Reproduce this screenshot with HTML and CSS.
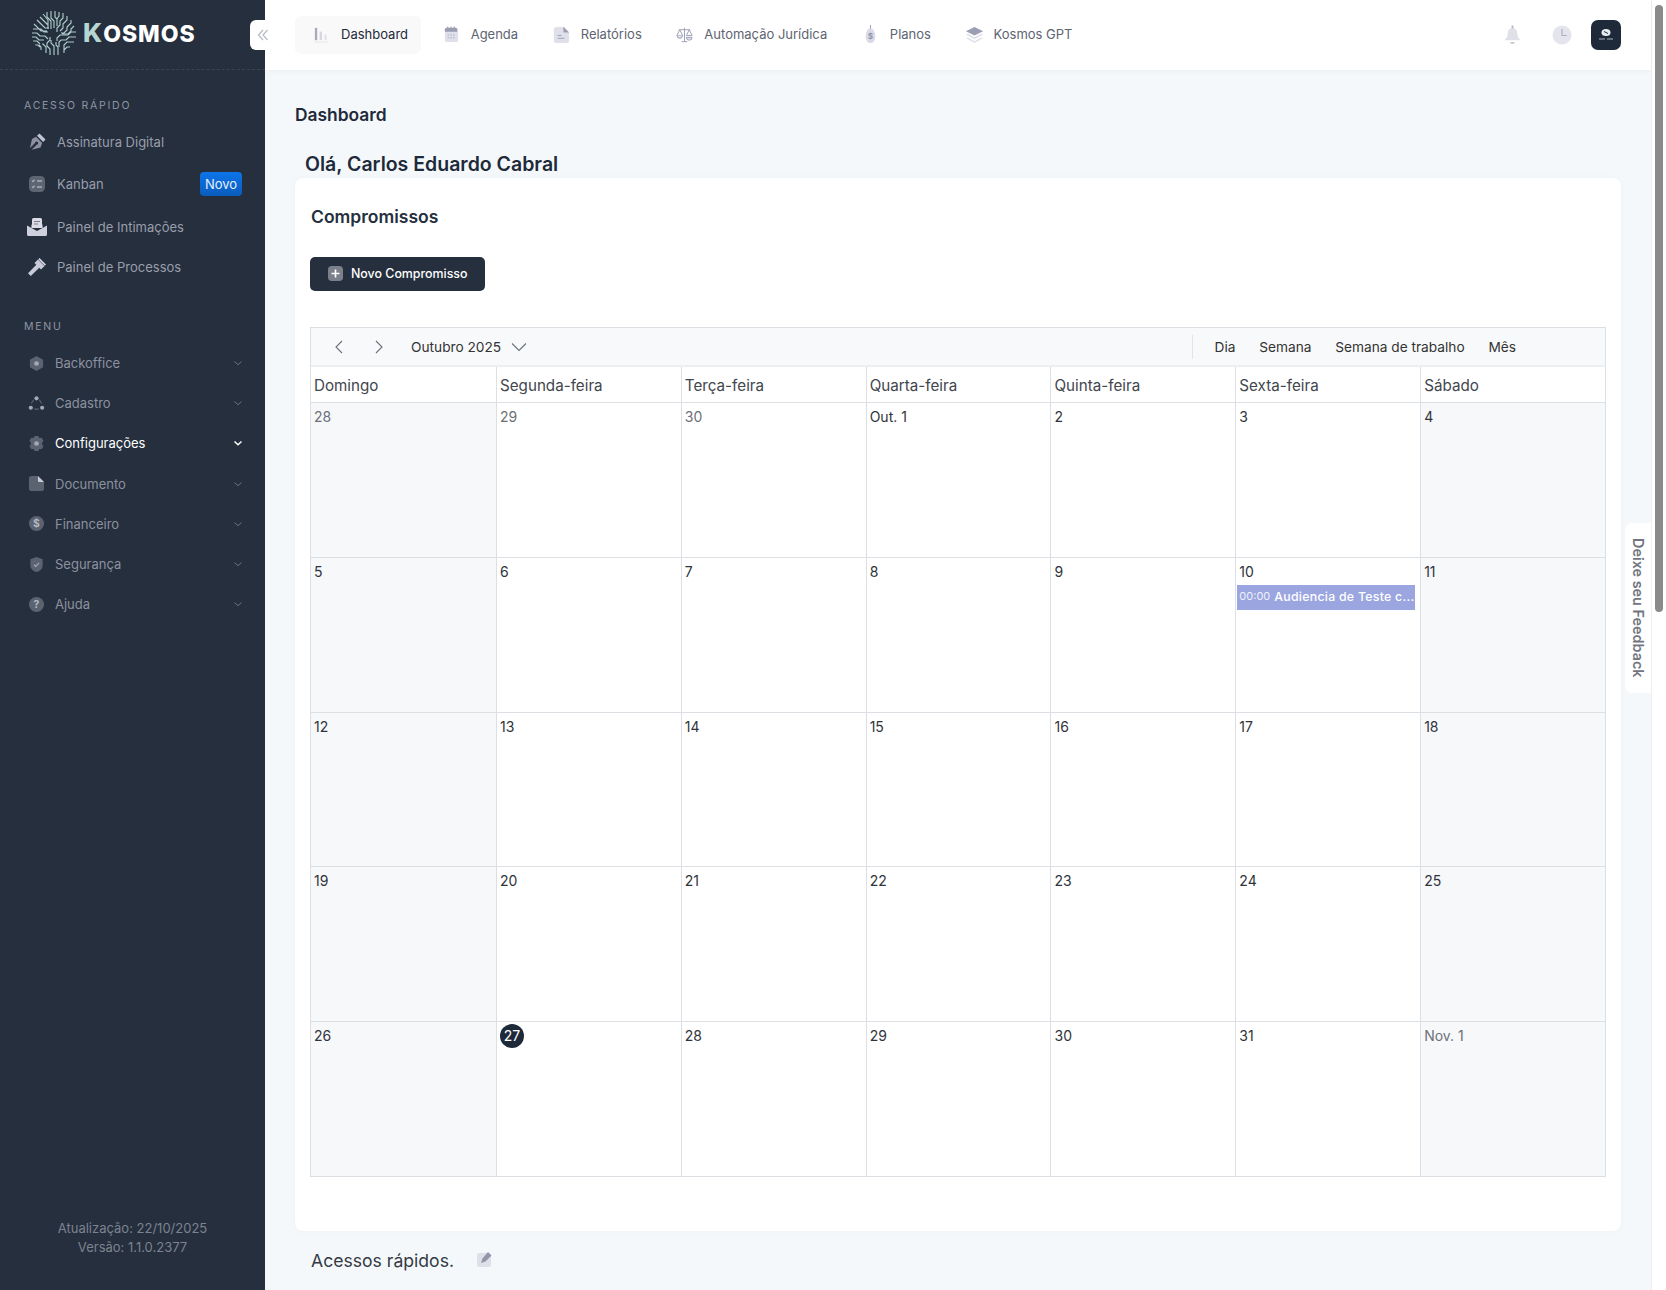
FILE: index.html
```html
<!DOCTYPE html>
<html lang="pt-BR">
<head>
<meta charset="utf-8">
<title>Kosmos - Dashboard</title>
<link rel="stylesheet" href="styles.css">
</head>
<body>
<div class="app">
  <aside class="sidebar">
    <div class="brand">
      <svg class="brand-mark" viewBox="0 0 46 46" fill="none" stroke="#aeccc9" stroke-width="1.15">
        <defs><clipPath id="globe"><circle cx="23" cy="23" r="22.5"/></clipPath></defs>
        <g clip-path="url(#globe)">
          <path d="M6 10l8 8h4M9 7l8 8v4M3 14l7 7h6M12 4l5 6v6M2 19h8l3 3h4"/>
          <path d="M16 2v5l4 4v8M20 1v7l3 3v7M24 1v6l2 2v7M28 2v4l-2 3M32 3v5l-3 3v4l-3 3v4M36 6v4l-4 4v4l-3 3M40 10v3l-4 4v3l-3 3h-3M43 16l-3 3v2l-3 3h-6"/>
          <path d="M45 22h-5l-3 3h-8l-3 3v3M45 27h-7l-3 3h-5l-2 2v5M43 32h-7l-3 3v6M39 37h-3l-3 3v3"/>
          <path d="M27 45v-8l-2-2v-3M23 45v-9l-3-3v-3M19 45v-6l-3-3v-3l3-3v-3M15 43v-6l-3-3h-1M10 40v-3l-2-2"/>
          <path d="M1 23h5l3 3h5l3 3M1 27h4l3 3h5M2 31h4l3 3M4 35h3l2 2"/>
        </g>
      </svg>
      <div class="brand-name"><span class="brand-k">K</span><span class="brand-rest">OSMOS</span></div>
    </div>
    <button class="collapse" type="button" aria-label="Recolher">
      <svg viewBox="0 0 14 14" fill="none" stroke="#b8bcc6" stroke-width="1.3"><path d="M7 2 2.500 7 7 12M11.500 2 7 7l4.500 5"/></svg>
    </button>

    <div class="side-label side-label-first">ACESSO RÁPIDO</div>
    <a class="quick quick-40">
      <svg class="quick-ico" viewBox="0 0 20 20"><path fill="#c3c4d3" d="M12.500 1.500 18.500 7.500 16.200 10 10 3.800Z"/><path fill="#8f91a3" d="M9 4.800 15.200 11 13.500 15.500 4.600 17.800 9.700 12.700A1.600 1.600 0 1 0 8 11L3 16.100 5 7Z"/></svg>
      <span>Assinatura Digital</span>
    </a>
    <a class="quick quick-43">
      <svg class="quick-ico" viewBox="0 0 20 20"><rect x="2" y="2" width="16" height="16" rx="4.500" fill="#5d6472"/><path fill="none" stroke="#a9adba" stroke-width="1.300" d="M5 6.600l1 1 1.600-1.800M5 12.600l1 1 1.600-1.800M10 7h5M10 13h5"/></svg>
      <span>Kanban</span>
      <span class="badge">Novo</span>
    </a>
    <a class="quick quick-43">
      <svg class="quick-ico" viewBox="0 0 20 20"><path fill="#8a8c9d" d="M4 8 10 3l6 5v3H4Z"/><path fill="#dcdce6" d="M5 2.500A1.500 1.500 0 0 1 6.500 1h7A1.500 1.500 0 0 1 15 2.500V11H5Z"/><path stroke="#7a7c8e" stroke-width="1.200" d="M7 4.500h6M7 7h4"/><path fill="#cfd0de" d="M0 8.500 10 14l10-5.500v9A1.500 1.500 0 0 1 18.500 19h-17A1.500 1.500 0 0 1 0 17.500Z"/></svg>
      <span>Painel de Intimações</span>
    </a>
    <a class="quick quick-38">
      <svg class="quick-ico" viewBox="0 0 20 20"><path fill="#c9cad8" d="M11 2.500 17.500 9 14 12.500 12.300 10.800 3.800 19 1 16.200 9.300 7.700 7.500 6Z"/><path fill="#d6d7e2" d="M12.500 1 19 7.500 17.800 8.700 11.300 2.200Z"/></svg>
      <span>Painel de Processos</span>
    </a>

    <div class="side-label side-label-menu">MENU</div>
    <a class="menu-item">
      <svg class="menu-ico" viewBox="0 0 18 18"><path fill="#5b6270" d="M9 1l7 4v8l-7 4-7-4V5Z"/><circle cx="9" cy="9" r="2.500" fill="#a4a8b5"/></svg>
      <span class="menu-text">Backoffice</span><svg class="chev" viewBox="0 0 10 10"><path d="M1.500 3.500 5 6.700l3.500-3.200"/></svg>
    </a>
    <a class="menu-item">
      <svg class="menu-ico" viewBox="0 0 18 18"><circle cx="9" cy="3.500" r="2.200" fill="#a4a8b5"/><circle cx="3" cy="13.500" r="2.200" fill="#a4a8b5"/><circle cx="15" cy="13.500" r="2.200" fill="#a4a8b5"/><path fill="none" stroke="#5b6270" stroke-width="1.200" d="M6 5 3.500 9M12 5l2.500 4M6.500 15h5"/></svg>
      <span class="menu-text">Cadastro</span><svg class="chev" viewBox="0 0 10 10"><path d="M1.500 3.500 5 6.700l3.500-3.200"/></svg>
    </a>
    <a class="menu-item menu-item-active">
      <svg class="menu-ico" viewBox="0 0 18 18"><path fill="#5b6270" d="M7 1h4l1 2.200 2.500-.3 2 3.300L15 8v2l1.500 1.800-2 3.300-2.500-.3L11 17H7l-1-2.200-2.500.3-2-3.300L3 10V8L1.500 6.200l2-3.300 2.500.3Z"/><circle cx="9" cy="9" r="2.500" fill="#a4a8b5"/></svg>
      <span class="menu-text">Configurações</span><svg class="chev" viewBox="0 0 10 10"><path d="M1.500 3.500 5 6.700l3.500-3.200"/></svg>
    </a>
    <a class="menu-item">
      <svg class="menu-ico" viewBox="0 0 18 18"><path fill="#5b6270" d="M4 1h6.500L17 7.500V14a3 3 0 0 1-3 3H4a3 3 0 0 1-3-3V4a3 3 0 0 1 3-3Z"/><path fill="#c9cbd6" d="M10.500 1 17 7.500h-5A1.500 1.500 0 0 1 10.500 6Z"/></svg>
      <span class="menu-text">Documento</span><svg class="chev" viewBox="0 0 10 10"><path d="M1.500 3.500 5 6.700l3.500-3.200"/></svg>
    </a>
    <a class="menu-item">
      <svg class="menu-ico" viewBox="0 0 18 18"><circle cx="9" cy="9" r="8" fill="#5b6270"/><text class="menu-glyph" x="9" y="12.800" text-anchor="middle">$</text></svg>
      <span class="menu-text">Financeiro</span><svg class="chev" viewBox="0 0 10 10"><path d="M1.500 3.500 5 6.700l3.500-3.200"/></svg>
    </a>
    <a class="menu-item">
      <svg class="menu-ico" viewBox="0 0 18 18"><path fill="#5b6270" d="M9 1l6.500 2.500v6.500c0 3.500-3 6-6.500 7-3.500-1-6.500-3.500-6.500-7V3.500Z"/><path fill="none" stroke="#a4a8b5" stroke-width="1.300" d="M6.300 9.200 8.200 11l3.500-3.800"/></svg>
      <span class="menu-text">Segurança</span><svg class="chev" viewBox="0 0 10 10"><path d="M1.500 3.500 5 6.700l3.500-3.200"/></svg>
    </a>
    <a class="menu-item">
      <svg class="menu-ico" viewBox="0 0 18 18"><circle cx="9" cy="9" r="8" fill="#5b6270"/><text class="menu-glyph" x="9" y="12.800" text-anchor="middle">?</text></svg>
      <span class="menu-text">Ajuda</span><svg class="chev" viewBox="0 0 10 10"><path d="M1.500 3.500 5 6.700l3.500-3.200"/></svg>
    </a>

    <div class="side-foot">Atualização: 22/10/2025<br>Versão: 1.1.0.2377</div>
  </aside>

  <div class="main">
    <header class="topbar">
      <nav class="topnav">
        <a class="tab tab-active">
          <svg class="tab-ico" viewBox="0 0 20 20"><rect x="3" y="3" width="2.500" height="13" fill="#a9abbd"/><rect x="8" y="7" width="2.500" height="9" fill="#d5d6e0"/><rect x="13" y="10" width="2.500" height="6" fill="#e3e4ec"/><rect x="2" y="17.500" width="15" height="1" fill="#e3e4ec"/></svg>
          Dashboard
        </a>
        <a class="tab">
          <svg class="tab-ico" viewBox="0 0 20 20"><rect x="3" y="3" width="14" height="15" rx="2" fill="#dfe0ea"/><path fill="#9b9db2" d="M3 5a2 2 0 0 1 2-2h.500V1.500h1V3h2.500V1.500h1V3h2.500V1.500h1V3h.500a2 2 0 0 1 2 2v2H3Z"/><path stroke="#a9abbd" d="M6 10.500h8M6 13.500h8" stroke-dasharray="1.500 1.300"/></svg>
          Agenda
        </a>
        <a class="tab">
          <svg class="tab-ico" viewBox="0 0 20 20"><path fill="#dfe0ea" d="M5 2h6l7 6v8a3 3 0 0 1-3 3H5a3 3 0 0 1-3-3V5a3 3 0 0 1 3-3Z"/><path fill="#9b9db2" d="M12 1.500 18 8h-5a1 1 0 0 1-1-1Z"/><path stroke="#9b9db2" d="M6 11h4M6 14h7"/></svg>
          Relatórios
        </a>
        <a class="tab">
          <svg class="tab-ico" viewBox="0 0 20 20" fill="none" stroke="#9b9db2" stroke-width="1"><path d="M4 5h12M10 3v14M7 17.500h6M5 5 2 11h6ZM15 5l-3 6h6Z"/><path fill="#dfe0ea" d="M2 11a3 3 0 0 0 6 0M12 13a3 3 0 0 0 6 0Z"/></svg>
          Automação Jurídica
        </a>
        <a class="tab">
          <svg class="tab-ico" viewBox="0 0 20 20"><rect x="9.500" y="0" width="1" height="5" fill="#9b9db2"/><path fill="#d9dbe8" d="M8 4h4c2 2 3 5 3 8 0 4-2 7-5 7s-5-3-5-7c0-3 1-6 3-8Z"/><text class="tab-glyph" x="10" y="15" text-anchor="middle">$</text></svg>
          Planos
        </a>
        <a class="tab">
          <svg class="tab-ico" viewBox="0 0 20 20"><path fill="#9b9db2" d="M10 2 19 6.500 10 11 1 6.500Z"/><path fill="#dfe0ea" d="M1 10l2-.8L10 13l7-3.800 2 .8-9 5ZM1 14l2-.8L10 17l7-3.800 2 .8-9 5Z"/></svg>
          Kosmos GPT
        </a>
      </nav>
      <div class="top-actions">
        <svg class="act-bell" viewBox="0 0 20 22"><path fill="#e0e1e8" d="M10 3c3.500 0 5 3 5 6 0 3 1.500 5 3.500 7h-17C3.500 14 5 12 5 9c0-3 1.500-6 5-6Z"/><rect x="9" y="0.500" width="2" height="3" fill="#b8bac8"/><rect x="8" y="18" width="4" height="1.500" fill="#b8bac8"/></svg>
        <svg class="act-clock" viewBox="0 0 20 20"><circle cx="10" cy="10" r="9.500" fill="#e4e5ec"/><path fill="none" stroke="#aeb0c0" stroke-width="1.200" d="M10 4v6.500h5"/></svg>
        <div class="avatar">
          <svg viewBox="0 0 30 30"><ellipse cx="15" cy="12.500" rx="4.500" ry="3.500" fill="#e8ecf2"/><path fill="none" stroke="#1e2a3a" stroke-width="1" d="M13 11.500l4 2"/><rect x="8" y="18.500" width="6" height="1" fill="#aab2bf"/><rect x="16" y="18.500" width="6" height="1" fill="#aab2bf"/></svg>
        </div>
      </div>
    </header>

    <main class="content">
      <h1 class="page-title">Dashboard</h1>
      <h2 class="hello">Olá, Carlos Eduardo Cabral</h2>
      <section class="card">
        <h3 class="card-title">Compromissos</h3>
        <button class="btn" type="button">
          <svg class="btn-ico" viewBox="0 0 14 14"><rect width="14" height="14" rx="3.500" fill="#7b808b"/><path stroke="#fff" stroke-width="1.500" d="M7 3.300v7.400M3.300 7h7.400"/></svg>
          Novo Compromisso
        </button>

        <div class="calendar">
          <div class="cal-bar">
            <svg class="cal-arrow" viewBox="0 0 12 16" fill="none"><path d="M9 2 3 8l6 6"/></svg>
            <svg class="cal-arrow cal-arrow-next" viewBox="0 0 12 16" fill="none"><path d="M3 2l6 6-6 6"/></svg>
            <span class="cal-month">Outubro 2025</span>
            <svg class="cal-drop" viewBox="0 0 16 10" fill="none"><path d="M1 1.500 8 8.500l7-7"/></svg>
            <div class="cal-views">
              <span>Dia</span><span>Semana</span><span>Semana de trabalho</span><span>Mês</span>
            </div>
          </div>
          <div class="cal-grid">
            <div class="wd">Domingo</div><div class="wd">Segunda-feira</div><div class="wd">Terça-feira</div><div class="wd">Quarta-feira</div><div class="wd">Quinta-feira</div><div class="wd">Sexta-feira</div><div class="wd">Sábado</div>

            <div class="day off muted"><span class="num">28</span></div><div class="day muted"><span class="num">29</span></div><div class="day muted"><span class="num">30</span></div><div class="day"><span class="num">Out. 1</span></div><div class="day"><span class="num">2</span></div><div class="day"><span class="num">3</span></div><div class="day off"><span class="num">4</span></div>

            <div class="day off"><span class="num">5</span></div><div class="day"><span class="num">6</span></div><div class="day"><span class="num">7</span></div><div class="day"><span class="num">8</span></div><div class="day"><span class="num">9</span></div>
            <div class="day"><span class="num">10</span><div class="event"><span class="event-time">00:00</span><span class="event-name">Audiencia de Teste c...</span></div></div>
            <div class="day off"><span class="num">11</span></div>

            <div class="day off"><span class="num">12</span></div><div class="day"><span class="num">13</span></div><div class="day"><span class="num">14</span></div><div class="day"><span class="num">15</span></div><div class="day"><span class="num">16</span></div><div class="day"><span class="num">17</span></div><div class="day off"><span class="num">18</span></div>

            <div class="day off"><span class="num">19</span></div><div class="day"><span class="num">20</span></div><div class="day"><span class="num">21</span></div><div class="day"><span class="num">22</span></div><div class="day"><span class="num">23</span></div><div class="day"><span class="num">24</span></div><div class="day off"><span class="num">25</span></div>

            <div class="day off"><span class="num">26</span></div><div class="day"><span class="num num-today">27</span></div><div class="day"><span class="num">28</span></div><div class="day"><span class="num">29</span></div><div class="day"><span class="num">30</span></div><div class="day"><span class="num">31</span></div><div class="day off muted"><span class="num">Nov. 1</span></div>
          </div>
        </div>
      </section>
      <div class="quick-access">
        <span>Acessos rápidos.</span>
        <svg class="qa-ico" viewBox="0 0 16 16"><rect x="0" y="2" width="14" height="14" rx="3" fill="#dedfe8"/><path fill="#9496a8" d="M11 1l3.500 3.500-6 6L4 12l1.500-4.500Z"/></svg>
      </div>
    </main>
    <a class="feedback">Deixe seu Feedback</a>
  </div>

  <div class="scrollbar"><div class="scroll-thumb"></div></div>
</div>
</body>
</html>
```

FILE: styles.css
```css
* { box-sizing: border-box; }
html, body { margin: 0; height: 100%; overflow: hidden; }
body { font-family: Inter, "Liberation Sans", sans-serif; color: #1e2a3a; background: #f5f8fa; }
a { text-decoration: none; color: inherit; }
h1, h2, h3 { margin: 0; }

.app { display: flex; height: 1290px; width: 1666px; overflow: hidden; }

/* sidebar */
.sidebar { position: relative; z-index: 2; flex: 0 0 265px; display: flex; flex-direction: column; background: #252f3e; padding-bottom: 33px; }
.brand { height: 70px; flex: none; display: flex; align-items: center; padding: 0 0 0 31px; border-bottom: 1px dashed #3a4454; gap: 6px; }
.brand-mark { width: 46px; height: 46px; flex: none; margin-top: -3px; }
.brand-name { font-weight: 800; line-height: 1; margin-top: -4px; display: flex; align-items: baseline; letter-spacing: .95px; }
.brand-k { font-size: 26px; color: #b5d6d2; }
.brand-rest { font-size: 23px; color: #fff; }
.collapse { position: absolute; top: 20px; left: 250px; width: 30px; height: 30px; padding: 0 0 0 6px; border: 0; border-radius: 6px 0 0 6px; background: #fff; display: flex; align-items: center; }
.collapse svg { width: 14px; height: 14px; }

.side-label { font-size: 10.500px; line-height: 16px; letter-spacing: 1.750px; color: #8f95a1; padding-left: 24px; }
.side-label-first { margin-top: 28px; margin-bottom: 8px; }
.side-label-menu { margin-top: 33px; margin-bottom: 8px; }

.quick { display: flex; align-items: center; padding: 0 23px 0 27px; font-size: 13px; color: #9a9eaa; }
.quick-38 { height: 38px; }
.quick-40 { height: 40px; }
.quick-43 { height: 43px; }
.quick-ico { width: 20px; height: 20px; margin-right: 10px; flex: none; }
.badge { margin-left: auto; width: 42px; height: 24px; border-radius: 4px; background: linear-gradient(180deg, #0d74ea, #0a5cbc); color: #e6f0ff; text-align: center; line-height: 24px; font-size: 13px; }

.menu-item { display: flex; align-items: center; height: 40.200px; padding: 0 22px 0 28px; font-size: 13px; color: #8d919e; }
.menu-item-active { color: #fff; }
.menu-ico { width: 17px; height: 17px; flex: none; margin-right: 10px; }
.menu-glyph { font: 700 11px Inter, sans-serif; fill: #b4b8c3; }
.menu-text { flex: 1; }
.chev { width: 10px; height: 10px; fill: none; stroke: #6f7582; stroke-width: 1; }
.menu-item-active .chev { stroke: #fff; stroke-width: 1.500; }

.side-foot { margin-top: auto; text-align: center; font-size: 13px; line-height: 19px; color: #7d838e; }

/* main */
.main { position: relative; flex: 1; min-width: 0; display: flex; flex-direction: column; }
.topbar { height: 70px; flex: none; background: #fff; display: flex; align-items: center; justify-content: space-between; padding: 0 30px; box-shadow: 0 2px 6px rgba(30, 42, 58, .03); }
.topnav { display: flex; gap: 3.600px; }
.tab { display: flex; align-items: center; height: 38px; padding: 0 13px 2px 17px; border-radius: 6px; font-size: 13px; color: #5e6472; }
.tab-active { background: #f9f9f9; color: #1e2a3a; }
.tab-ico { width: 19px; height: 19px; margin-right: 10px; flex: none; }
.tab-glyph { font: 700 8px Inter, sans-serif; fill: #8f91a5; }
.top-actions { display: flex; align-items: center; }
.act-bell { width: 19px; height: 21px; margin-right: 30px; margin-top: 1px; }
.act-clock { width: 20px; height: 20px; margin-right: 19px; }
.avatar { width: 30px; height: 30px; border-radius: 7px; background: #1e2a3a; }
.avatar svg { display: block; width: 30px; height: 30px; }

.content { flex: 1; padding: 0 30px; }
.page-title { font-size: 17.400px; line-height: 24px; font-weight: 600; color: #1e2a3a; margin-top: 33px; }
.hello { font-size: 19.500px; line-height: 26px; font-weight: 600; color: #1e2a3a; margin: 24px 0 1px 10px; }

.card { background: #fff; border-radius: 8px; padding: 27px 15px 54px; box-shadow: 0 0 6px rgba(30, 42, 58, .03); }
.card-title { font-size: 17.500px; line-height: 24px; font-weight: 600; color: #252f3e; padding-left: 1px; }
.btn { display: flex; align-items: center; margin-top: 28px; height: 34px; width: 175px; padding: 0 0 1px 18px; border: 0; border-radius: 5px; background: #252f3e; color: #fff; font: 500 12.400px Inter, sans-serif; }
.btn-ico { width: 15px; height: 15px; margin-right: 8px; }

.calendar { margin-top: 36px; border: 1px solid #dcdfe3; border-right: 0; border-bottom: 0; }
.cal-bar { display: flex; align-items: center; height: 39px; padding: 0 0 0 22px; background: #f8f9fb; font-size: 13.700px; color: #3a3f48; border-bottom: 2px solid #eceef1; border-right: 1px solid #dcdfe3; }
.cal-arrow { width: 12px; height: 16px; stroke: #6b7078; stroke-width: 1.100; }
.cal-arrow-next { margin-left: 28px; }
.cal-month { margin-left: 26px; color: #333; }
.cal-drop { width: 16px; height: 10px; margin-left: 10px; stroke: #6b7078; stroke-width: 1.100; }
.cal-views { display: flex; gap: 23.800px; margin-left: auto; margin-right: 89px; height: 24px; align-items: center; border-left: 1px solid #e2e4e8; padding-left: 22px; color: #333; }

.cal-grid { display: grid; grid-template-columns: 186px repeat(6, minmax(0, 1fr)); grid-template-rows: 36px repeat(5, 154.800px); }
.wd { border-right: 1px solid #dcdfe3; border-bottom: 1px solid #dcdfe3; font-size: 15.200px; font-weight: 400; padding: 2px 0 0 3px; line-height: 33px; color: #42464d; }
.day { position: relative; min-width: 0; border-right: 1px solid #dcdfe3; border-bottom: 1px solid #dcdfe3; padding: 5px 0 0 3px; font-size: 14px; color: #2f333a; }
.off { background: #f7f8fa; }
.muted { color: #6c7078; }
.num { display: block; line-height: 17px; }
.num-today { width: 24px; height: 24px; margin-top: -3px; margin-bottom: -4px; line-height: 24px; border-radius: 50%; background: #1e2a3a; color: #fff; text-align: center; }
.event { display: flex; align-items: center; height: 25px; margin: 5px 5px 0 -2px; padding: 0 2px 2px; background: #9ba6e0; color: #fff; white-space: nowrap; overflow: hidden; }
.event-time { font-size: 11px; opacity: .85; margin-right: 4px; }
.event-name { font-size: 12.300px; font-weight: 500; letter-spacing: .28px; }

.quick-access { display: flex; align-items: center; padding: 18px 0 0 16px; font-size: 17.600px; line-height: 24px; color: #333a45; }
.qa-ico { width: 16px; height: 16px; margin-left: 23px; margin-top: -3px; }

.feedback { position: absolute; top: 523px; right: 0; width: 26px; height: 170px; border-radius: 7px 0 0 7px; background: #fff; writing-mode: vertical-rl; text-align: center; font-size: 14.400px; line-height: 26px; font-weight: 600; color: #71757f; }

.scrollbar { flex: 0 0 15px; background: #fff; border-left: 1px solid #eceef1; padding: 5px 3px 0 3px; }
.scroll-thumb { height: 607px; border-radius: 4px; background: #8a8a8a; }
```
